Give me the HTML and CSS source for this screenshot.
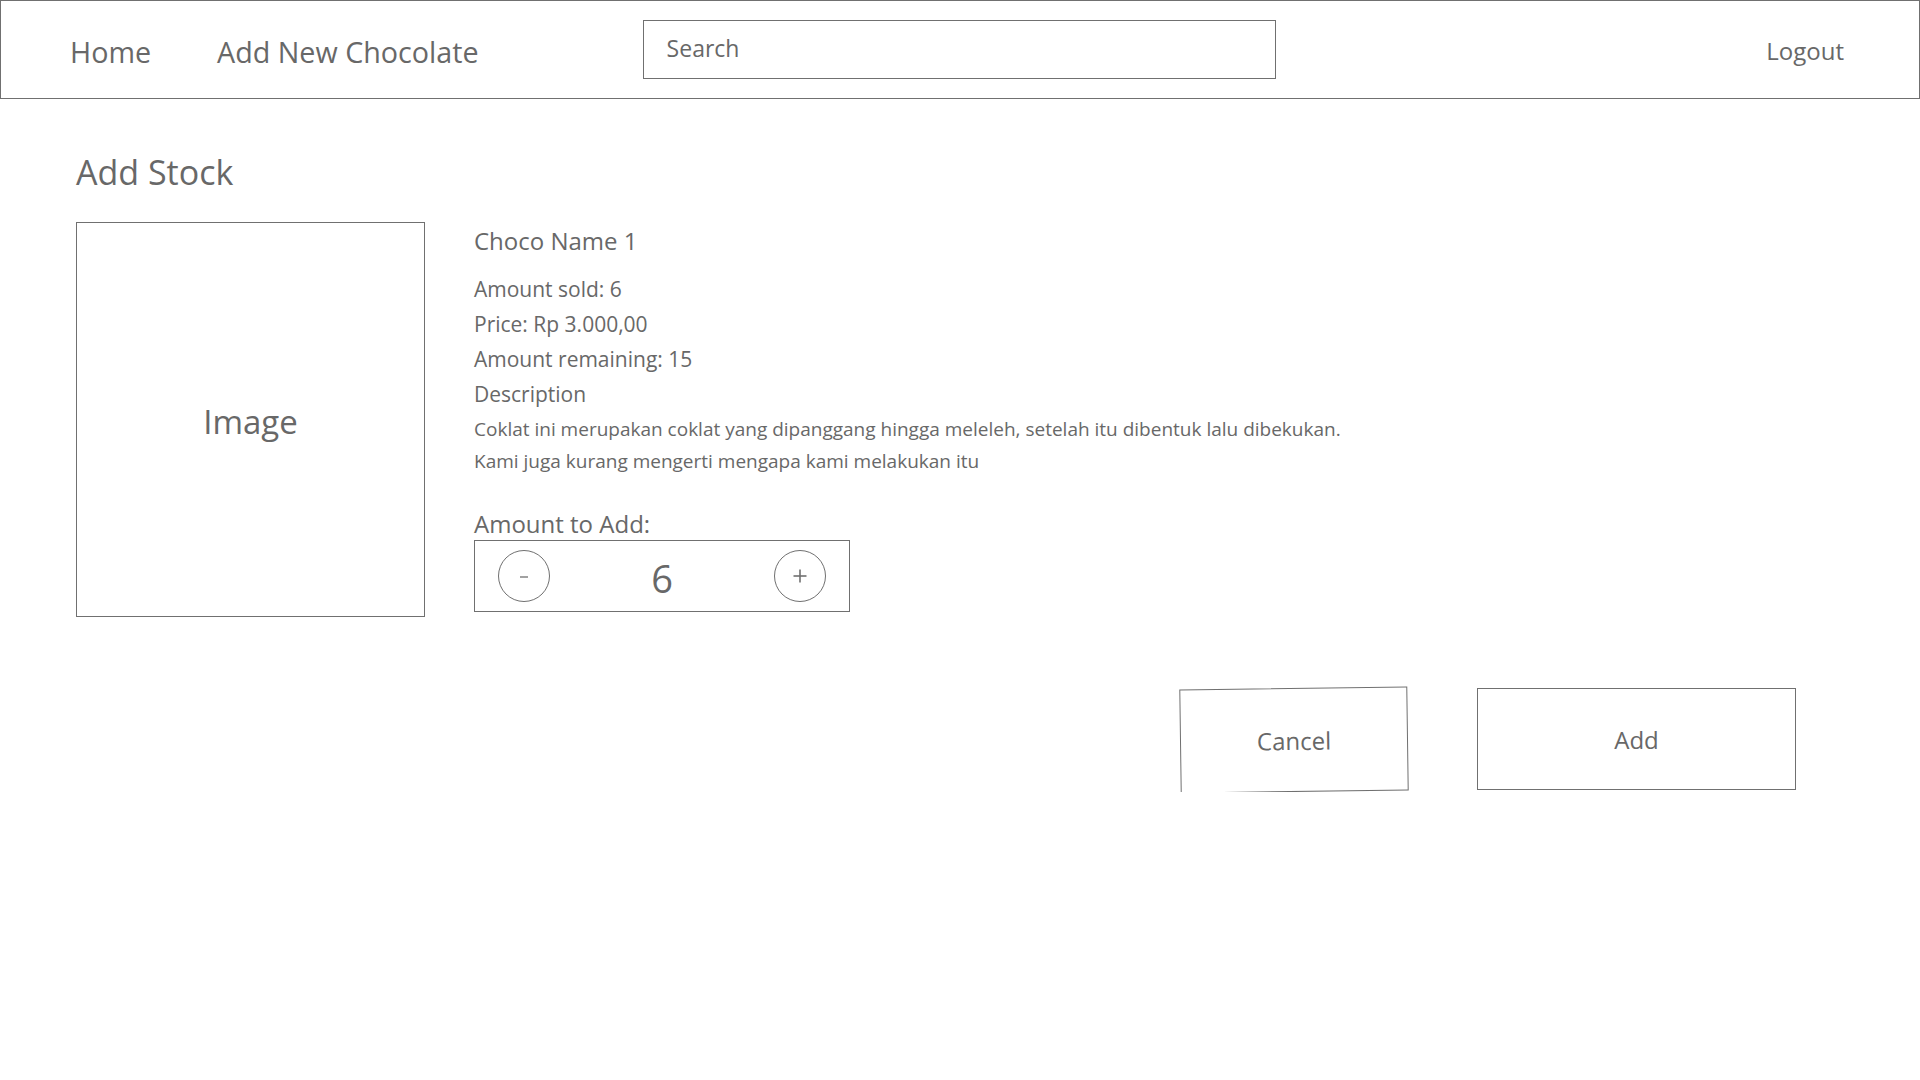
FILE: index.html
```html
<!DOCTYPE html>
<html lang="en">

<head>
    <meta charset="UTF-8">
    <meta name="viewport" content="width=device-width, initial-scale=1.0">
    <title>Add Stock</title>
    <link rel="stylesheet" href="styles.css">
</head>

<body>
    <header class="cabecera">
        <nav class="menu">
            <a href="#">Home</a>
            <a href="#">Add New Chocolate</a>
        </nav>
        <input class="buscar" type="text" placeholder="Search">
        <a class="logout" href="#">Logout</a>
    </header>

    <main class="contenido">
        <h1 class="titulo">Add Stock</h1>
        <div class="detalle">
            <div class="imagen">Image</div>
            <div class="info">
                <h2 class="nombre">Choco Name 1</h2>
                <p class="dato">Amount sold: 6</p>
                <p class="dato">Price: Rp 3.000,00</p>
                <p class="dato">Amount remaining: 15</p>
                <p class="dato">Description</p>
                <p class="descripcion">Coklat ini merupakan coklat yang dipanggang hingga meleleh, setelah itu dibentuk lalu dibekukan.<br>Kami juga kurang mengerti mengapa kami melakukan itu</p>

                <label class="etiqueta" for="cantidad">Amount to Add:</label>
                <div class="contador">
                    <button class="circulo" onclick="cambiar(-1)" aria-label="minus">
                        <svg width="12" height="12" viewBox="0 0 12 12"><line x1="2" y1="7" x2="10" y2="7" stroke="#707070" stroke-width="1.3"/></svg>
                    </button>
                    <span id="cantidad" class="numero">6</span>
                    <button class="circulo" onclick="cambiar(1)" aria-label="plus">
                        <svg width="16" height="16" viewBox="0 0 16 16"><line x1="1.5" y1="8" x2="14.5" y2="8" stroke="#707070" stroke-width="1.6"/><line x1="8" y1="1.5" x2="8" y2="14.5" stroke="#707070" stroke-width="1.6"/></svg>
                    </button>
                </div>
            </div>
        </div>

        <div class="acciones">
            <button class="boton cancelar">Cancel</button>
            <button class="boton">Add</button>
        </div>
    </main>

    <script>
        function cambiar(paso) {
            const cantidad = document.getElementById("cantidad");
            var valor = parseInt(cantidad.innerText) + paso;
            if (valor < 0) valor = 0;
            cantidad.innerText = valor;
        }
    </script>
</body>

</html>
```

FILE: styles.css
```css
* {
    margin: 0;
    padding: 0;
    box-sizing: border-box;
    font-family: 'Open Sans', 'Noto Sans', sans-serif;
}

body {
    background-color: white;
    color: #686868;
}

a {
    color: #686868;
    text-decoration: none;
}

.cabecera {
    display: flex;
    align-items: center;
    width: 100%;
    height: 99px;
    border: 1px solid #707070;
    padding: 0 75px 0 69px;
}

.menu {
    display: flex;
    gap: 66px;
    font-size: 28.7px;
    padding-top: 4px;
}

.buscar {
    margin-left: 164px;
    width: 633px;
    height: 59px;
    border: 1px solid #707070;
    padding: 0 23px 4px;
    font-size: 23px;
    color: #686868;
    outline: none;
}

.buscar::placeholder {
    color: #686868;
}

.logout {
    margin-left: auto;
    font-size: 24px;
    padding-top: 2px;
}

.contenido {
    padding: 0 124px 0 76px;
}

.titulo {
    font-size: 34px;
    font-weight: normal;
    line-height: 46px;
    margin-top: 50px;
    margin-bottom: 27px;
}

.detalle {
    display: flex;
    gap: 49px;
}

.imagen {
    display: flex;
    justify-content: center;
    align-items: center;
    width: 349px;
    height: 395px;
    border: 1px solid #707070;
    font-size: 33px;
    padding-top: 4px;
}

.info {
    display: flex;
    flex-direction: column;
    align-items: flex-start;
    padding-top: 2px;
}

.nombre {
    font-size: 24px;
    font-weight: normal;
    line-height: 34px;
    margin-bottom: 14px;
}

.dato {
    font-size: 21px;
    line-height: 35px;
}

.descripcion {
    font-size: 19px;
    line-height: 32px;
    margin-top: 1px;
}

.etiqueta {
    font-size: 24px;
    line-height: 32px;
    margin-top: 31px;
}

.contador {
    display: flex;
    justify-content: space-between;
    align-items: center;
    width: 376px;
    height: 72px;
    border: 1px solid #707070;
    padding: 0 23px;
}

.circulo {
    display: flex;
    justify-content: center;
    align-items: center;
    width: 52px;
    height: 52px;
    border-radius: 50%;
    border: 1px solid #707070;
    background: white;
    cursor: pointer;
}

.numero {
    font-size: 38px;
    padding-top: 4px;
}

.acciones {
    display: flex;
    justify-content: flex-end;
    gap: 69px;
    margin-top: 71px;
}

.boton {
    width: 319px;
    height: 102px;
    border: 1px solid #707070;
    background: white;
    color: #686868;
    font-size: 24px;
    cursor: pointer;
}

.cancelar {
    width: 228px;
    height: 104px;
    transform: rotate(-0.8deg);
}
```
